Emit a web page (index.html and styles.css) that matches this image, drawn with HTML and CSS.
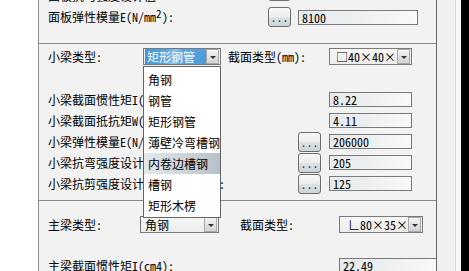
FILE: index.html
```html
<!DOCTYPE html>
<html>
<head>
<meta charset="utf-8">
<link rel="stylesheet" href="styles.css">
</head>
<body>
<div class="screen">
  <div class="gutter"></div>
  <div class="panel">
    <section class="sec sec-top">
      <div class="row h26">
        <span class="lab lab-top lab-cut">面板抗弯强度设计值</span>
        <span class="dots">...</span>
        <span class="field f-top"></span>
      </div>
      <div class="row h26">
        <span class="lab lab-top">面板弹性模量E(N/mm<sup>2</sup>):</span>
        <span class="dots">...</span>
        <span class="field f-top">8100</span>
      </div>
    </section>

    <section class="sec sec-mid">
      <div class="row h21">
        <span class="lab lab-type">小梁类型:</span>
        <div class="combo c-mid1">
          <span class="combo-text sel">矩形钢管</span>
          <span class="arrow"></span>
          <ul class="droplist">
            <li>角钢</li>
            <li>钢管</li>
            <li>矩形钢管</li>
            <li>薄壁冷弯槽钢</li>
            <li class="hot">内卷边槽钢</li>
            <li>槽钢</li>
            <li>矩形木楞</li>
          </ul>
        </div>
        <span class="lab lab-type2">截面类型(mm):</span>
        <div class="combo c-mid2">
          <span class="combo-text">□40×40×</span>
          <span class="arrow"></span>
        </div>
      </div>
      <div class="vals">
        <div class="row h21">
          <span class="lab lab-val">小梁截面惯性矩I(cm4):</span>
          <span class="gap-btn"></span>
          <span class="field f-mid">8.22</span>
        </div>
        <div class="row h21">
          <span class="lab lab-val">小梁截面抵抗矩W(cm3):</span>
          <span class="gap-btn"></span>
          <span class="field f-mid">4.11</span>
        </div>
        <div class="row h21">
          <span class="lab lab-val">小梁弹性模量E(N/mm<sup>2</sup>):</span>
          <span class="dots">...</span>
          <span class="field f-mid">206000</span>
        </div>
        <div class="row h21">
          <span class="lab lab-val">小梁抗弯强度设计值f(N/mm<sup>2</sup>):</span>
          <span class="dots">...</span>
          <span class="field f-mid">205</span>
        </div>
        <div class="row h21">
          <span class="lab lab-val">小梁抗剪强度设计值[f<sub>v</sub>](N/mm<sup>2</sup>):</span>
          <span class="dots">...</span>
          <span class="field f-mid">125</span>
        </div>
      </div>
    </section>

    <section class="sec sec-bot">
      <div class="row h21">
        <span class="lab lab-btype">主梁类型:</span>
        <div class="combo c-bot1">
          <span class="combo-text">角钢</span>
          <span class="arrow"></span>
        </div>
        <span class="lab lab-btype2">截面类型:</span>
        <div class="combo c-bot2">
          <span class="combo-text">∟80×35×</span>
          <span class="arrow"></span>
        </div>
      </div>
      <div class="row h21 row-last">
        <span class="lab lab-bval">主梁截面惯性矩I(cm4):</span>
        <span class="field f-bot">22.49</span>
      </div>
    </section>
  </div>
  <div class="side">
    <div class="side-a"></div>
    <div class="side-b"></div>
    <div class="side-c"></div>
    <div class="side-d"></div>
  </div>
</div>
</body>
</html>
```

FILE: styles.css
```css
* { box-sizing: border-box; margin: 0; padding: 0; }
html, body { width: 469px; height: 271px; overflow: hidden; background: #fff; }
body {
  font-family: "Noto Sans Mono CJK SC", "Noto Sans CJK SC", "Liberation Mono", monospace;
  font-size: 12px;
  line-height: 14px;
  color: #000;
}
.screen { display: flex; width: 469px; height: 271px; }
.gutter { flex: none; width: 38px; background: #fff; }
.panel {
  flex: none;
  width: 399px;
  height: 271px;
  background: #f2f2f2;
  border-left: 1px solid #8e8e8e;
  border-right: 1px solid #6a6a6a;
  overflow: hidden;
}
.side { flex: none; display: flex; width: 32px; }
.side-a { width: 18px; background: #f0f0f0; }
.side-b { width: 1px; background: #d6d6d6; }
.side-c { width: 5px; background: #f8f8f8; }
.side-d { width: 8px; background: #000; }

.sec { border-bottom: 1px solid #8a8a8a; }
.sec-top { margin-top: -22px; padding-bottom: 13px; }
.sec-mid { padding: 2px 0 6px; }
.vals { margin-top: 22px; }
.sec-bot { padding-top: 13px; border-bottom: none; }
.row-last { margin-top: 20px; }

.row { display: flex; align-items: center; padding-left: 9px; white-space: nowrap; }
.h26 { height: 26px; }
.h21 { height: 21px; }
.lab { flex: none; }
.lab sup { display: inline-block; width: 6px; font-size: 11px; line-height: 0; vertical-align: 4px; }
.lab sub { display: inline-block; width: 3px; font-size: 8px; line-height: 0; vertical-align: -2px; }
.lab-top { width: 220px; }
.lab-cut { align-self: flex-end; margin-bottom: 1px; }
.lab-type { width: 95px; }
.lab-type2 { width: 101px; margin-left: 7px; }
.lab-val { width: 250px; }
.lab-btype { width: 92px; }
.lab-btype2 { width: 99px; margin-left: 21px; }
.lab-bval { width: 291px; }

.dots {
  flex: none;
  width: 23px;
  height: 20px;
  border: 1px solid #6e6e6e;
  border-radius: 3px;
  background: linear-gradient(#f6f6f6, #ededed 48%, #dde2e6 52%, #ccd3d9);
  display: flex;
  justify-content: center;
  align-items: flex-end;
  font-size: 12px;
  line-height: 12px;
  padding-bottom: 3px;
  color: #3a3a3a;
}
.gap-btn { flex: none; width: 23px; }

.field {
  flex: none;
  height: 15px;
  border: 1px solid #7a7a7a;
  background: linear-gradient(to right, #e8ebed, #eceef0 45%, #f9f9f9);
  padding-left: 3px;
  line-height: 13px;
}
.f-top { width: 120px; margin-left: 7px; }
.f-mid { width: 83px; margin-left: 8px; }
.f-bot { width: 100px; }

.combo {
  position: relative;
  flex: none;
  height: 17px;
  border: 1px solid #7a7a7a;
  background: linear-gradient(#f7f7f7, #ececec);
  display: flex;
  align-items: center;
  padding: 0 1px;
}
.c-mid1 { width: 78px; }
.c-mid2 { width: 83px; }
.c-bot1 { width: 79px; }
.c-bot2 { width: 84px; }
.combo-text {
  flex: 1;
  height: 15px;
  line-height: 15px;
  padding-left: 3px;
  overflow: hidden;
}
.c-bot2 .combo-text { padding-left: 7px; }
.c-mid2 .combo-text { padding-left: 5px; }
.combo-text.sel {
  color: #fff;
  padding-left: 2px;
  background: linear-gradient(100deg, #4596d6 0%, #5aa6de 35%, #8cc2ea 48%, #5ea8de 58%, #4b9cd9 100%);
}
.arrow {
  flex: none;
  width: 13px;
  height: 15px;
  border: 1px solid #a9a9a9;
  background: linear-gradient(#f4f4f4, #e2e2e2 50%, #d0d4d8);
  display: flex;
  align-items: center;
  justify-content: center;
}
.arrow::after {
  content: "";
  border-left: 3px solid transparent;
  border-right: 3px solid transparent;
  border-top: 3px solid #333;
  margin-top: 1px;
}

.droplist {
  position: absolute;
  z-index: 5;
  left: -1px;
  top: 17px;
  width: 78px;
  height: 152px;
  list-style: none;
  background: #fff;
  border: 1px solid #646464;
  padding-top: 2px;
  overflow: hidden;
}
.droplist li {
  height: 21px;
  line-height: 21px;
  padding-left: 4px;
  white-space: nowrap;
  overflow: hidden;
}
.droplist li.hot {
  background: linear-gradient(to right, #e4e8eb, #cdd4da 55%, #b6c0c8);
}
```
